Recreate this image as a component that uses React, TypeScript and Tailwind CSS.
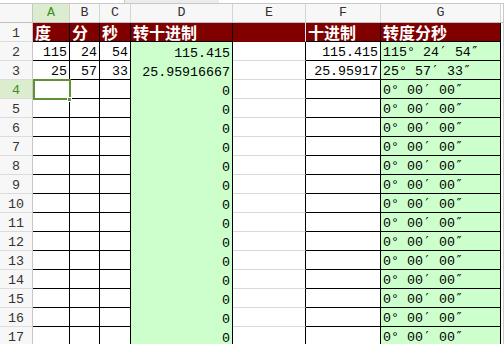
const mono = "font-['Liberation_Mono','DejaVu_Sans_Mono',monospace] text-[13.3px] leading-none";
const cjk = "font-['Noto_Sans_CJK_SC',sans-serif] font-bold text-[16px] leading-none text-white";
const prime = "font-['DejaVu_Sans_Mono',monospace]";

type Dms = [string, string, string];

const rows: { a: string; b: string; c: string; d: string; f: string; g: Dms }[] = [
  { a: "115", b: "24", c: "54", d: "115.415", f: "115.415", g: ["115", "24", "54"] },
  { a: "25", b: "57", c: "33", d: "25.95916667", f: "25.95917", g: ["25", "57", "33"] },
  ...Array.from({ length: 14 }, () => ({ a: "", b: "", c: "", d: "0", f: "", g: ["0", "00", "00"] as Dms })),
];

const rowHead = "flex items-end justify-center pb-[1px] bg-[#f7f7f7] border-r border-b border-r-[#c6c6c6] border-b-[#dcdcdc] text-[#333]";
const num = "flex items-end justify-end pr-[2px] pb-[1px]";
const red = "flex items-end pl-[2px] pb-[1px] bg-[#800000] border-r border-b border-black";

function DmsText({ v }: { v: Dms }) {
  return (
    <span className="whitespace-pre">
      {v[0]}° {v[1]}
      <span className={prime}>′</span> {v[2]}
      <span className={prime}>″</span>
    </span>
  );
}

export default function App() {
  return (
    <div className={`relative w-[504px] h-[344px] overflow-hidden bg-white text-black ${mono}`}>
      {/* bottom edge of the formula bar */}
      <div className="flex h-[4px] border-b border-[#c8c8c8]">
        <div className="w-[125px] bg-white border-r border-[#c8c8c8]" />
        <div className="w-[94px] bg-[#ececec]" />
        <div className="flex-1 bg-white" />
      </div>

      <div className="grid grid-cols-[33px_37px_30px_31px_102px_73px_75px_120px_3px] auto-rows-[19px]">
        {/* column headers */}
        <div className="bg-[#f7f7f7] border-r border-b border-r-[#c6c6c6] border-b-[#c0c0c0]" />
        <div className="flex items-center justify-center bg-[#dbeccf] border-r border-b border-r-[#d0d0d0] border-b-[#c0c0c0] text-[#3f8f1f]">A</div>
        {["B", "C", "D", "E", "F", "G"].map((c) => (
          <div key={c} className="flex items-center justify-center bg-[#f7f7f7] border-r border-b border-r-[#d4d4d4] border-b-[#c0c0c0] text-[#333]">
            {c}
          </div>
        ))}
        <div className="bg-white border-r border-b border-r-[#c8c8c8] border-b-[#c0c0c0]" />

        {/* row 1 */}
        <div className={rowHead}>1</div>
        <div className={red}><span className={cjk}>度</span></div>
        <div className={red}><span className={cjk}>分</span></div>
        <div className={red}><span className={cjk}>秒</span></div>
        <div className={red}><span className={cjk}>转十进制</span></div>
        <div className="bg-[#800000] border-r border-b border-r-[#e6e6e6] border-b-[#800000]" />
        <div className={red}><span className={cjk}>十进制</span></div>
        <div className={red}><span className={cjk}>转度分秒</span></div>
        <div className="bg-white border-r border-[#c8c8c8]" />

        {rows.map((r, i) => {
          const n = i + 2;
          return (
            <div key={n} className="contents">
              {n === 4 ? (
                <div className="flex items-end justify-center pb-[1px] bg-[#dbeccf] border-r border-b border-r-[#c6c6c6] border-b-[#dcdcdc] text-[#3f8f1f]">{n}</div>
              ) : (
                <div className={rowHead}>{n}</div>
              )}
              <div className={`${num} bg-white border-r border-b border-black`}>{r.a}</div>
              <div className={`${num} bg-white border-r border-b border-black`}>{r.b}</div>
              <div className={`${num} bg-white border-r border-b border-black`}>{r.c}</div>
              <div className={`${num} bg-[#ccffcc] border-r border-black`}>{r.d}</div>
              <div className="bg-white border-r border-b border-r-black border-b-[#d9d9d9]" />
              <div className={`${num} bg-white border-r border-b border-black`}>{r.f}</div>
              <div className="flex items-end pl-[2px] pb-[1px] bg-[#ccffcc] border-r border-b border-black">
                <DmsText v={r.g} />
              </div>
              <div className="bg-white border-r border-[#c8c8c8]" />
            </div>
          );
        })}
      </div>

      {/* selected cell A4 */}
      <div className="absolute left-[33px] top-[79px] w-[38px] h-[21px] border-2 border-[#5d9237]" />
      <div className="absolute left-[67px] top-[97px] w-[5px] h-[5px] bg-[#5d9237] border border-white" />
    </div>
  );
}
